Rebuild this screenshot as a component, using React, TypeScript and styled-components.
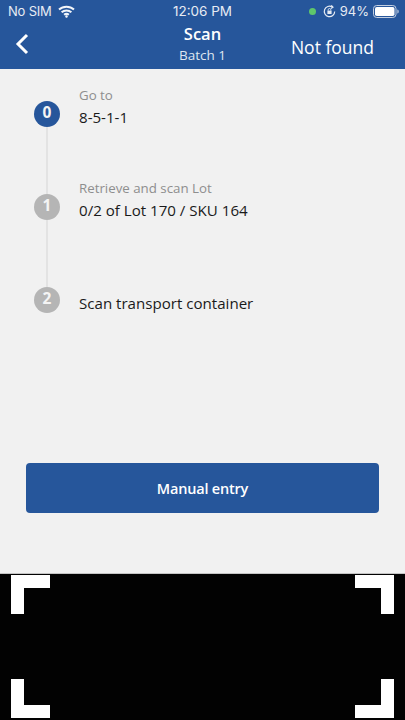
import React from "react";
import styled, { createGlobalStyle } from "styled-components";

const GlobalStyle = createGlobalStyle`
	html, body {
		margin: 0;
		padding: 0;
		background: #f1f1f1;
	}
`;

const Page = styled.div`
	width: 405px;
	height: 720px;
	display: flex;
	flex-direction: column;
	overflow: hidden;
	font-family: "Open Sans", "Liberation Sans", sans-serif;
	background: #f1f1f1;
`;

const Header = styled.header`
	height: 69px;
	flex-shrink: 0;
	background: #26569b;
	color: #fff;
`;

const StatusBar = styled.div`
	height: 22px;
	display: grid;
	grid-template-columns: 1fr auto 1fr;
	align-items: center;
	padding: 0 6px;
	font-family: Inter, "Liberation Sans", sans-serif;
	font-size: 13px;
	color: #e6ebf3;
`;

const StatusLeft = styled.div`
	display: flex;
	align-items: center;
	gap: 6px;
	padding-left: 2px;
	letter-spacing: -0.2px;
`;

const StatusTime = styled.div`
	font-size: 13.5px;
`;

const StatusRight = styled.div`
	display: flex;
	align-items: center;
	justify-content: flex-end;
	gap: 4px;
`;

const GreenDot = styled.span`
	width: 7px;
	height: 7px;
	border-radius: 50%;
	background: #5fc66b;
	margin-right: 3px;
`;

const NavBar = styled.div`
	height: 47px;
	display: grid;
	grid-template-columns: 1fr auto 1fr;
	align-items: center;
	padding: 0 15px;
`;

const BackButton = styled.button`
	width: 14px;
	height: 22px;
	padding: 0;
	border: none;
	background: none;
	display: flex;
	margin-top: -4px;
`;

const TitleBlock = styled.div`
	display: flex;
	flex-direction: column;
	align-items: center;
	margin-top: -3px;
`;

const Title = styled.div`
	font-size: 16.5px;
	font-weight: 600;
	line-height: 22px;
`;

const Subtitle = styled.div`
	font-size: 13.5px;
	line-height: 20px;
	color: #dfe6f0;
`;

const NotFound = styled.div`
	justify-self: end;
	margin: 2px 16px 0 0;
	font-size: 17.5px;
	line-height: 24px;
`;

const Content = styled.main`
	flex: 1;
	padding: 18px 26px 0;
`;

const Steps = styled.div`
	padding-left: 8px;
`;

const Step = styled.div`
	height: 93px;
	display: flex;
	gap: 19px;
`;

const Rail = styled.div<{ $first?: boolean }>`
	width: 26px;
	display: flex;
	flex-direction: column;
	align-items: center;
	&::before {
		content: "";
		width: 2px;
		height: 14px;
		background: ${(props) => (props.$first ? "transparent" : "#e3e3e3")};
	}
`;

const Line = styled.div`
	flex: 1;
	width: 2px;
	background: #e3e3e3;
`;

const Circle = styled.div<{ $active?: boolean }>`
	width: 26px;
	height: 26px;
	flex-shrink: 0;
	border-radius: 50%;
	display: flex;
	align-items: center;
	justify-content: center;
	background: ${(props) => (props.$active ? "#26569b" : "#b5b5b5")};
	color: #f4f4f4;
	font-size: 15.5px;
	font-weight: 700;
	line-height: 1;
	padding-bottom: 3px;
	box-sizing: border-box;
`;

const Label = styled.div`
	height: 16px;
	font-size: 13.3px;
	line-height: 16px;
	color: #8e8e8e;
`;

const Value = styled.div`
	margin-top: 3px;
	font-size: 15.1px;
	font-weight: 500;
	line-height: 22px;
	color: #1a1a1a;
`;

const ManualButton = styled.button`
	display: block;
	width: 353px;
	height: 50px;
	margin-top: 97px;
	border: none;
	border-radius: 4px;
	background: #26569b;
	color: #fff;
	font-family: inherit;
	font-size: 14.5px;
	font-weight: 600;
	letter-spacing: -0.2px;
`;

const Scanner = styled.section`
	position: relative;
	height: 147px;
	flex-shrink: 0;
	box-sizing: border-box;
	border-top: 1px solid #c4c4c4;
	background: #020202;
`;

// 스캔 영역 모서리 표시
const Corner = styled.div<{ $v: "top" | "bottom"; $h: "left" | "right" }>`
	position: absolute;
	${(props) => props.$v}: ${(props) => (props.$v === "top" ? "1px" : "2px")};
	${(props) => props.$h}: 11px;
	width: 39px;
	height: 39px;
	box-sizing: border-box;
	border-${(props) => props.$v}: 13px solid #fff;
	border-${(props) => props.$h}: 13px solid #fff;
`;

const WifiIcon = () => (
	<svg width="17" height="13" viewBox="0 0 17 13" fill="none" stroke="#f2f5f9" strokeWidth="2">
		<path d="M1 4.6C5.2 .8 11.8 .8 16 4.6" />
		<path d="M3.6 7.3C6.4 4.9 10.6 4.9 13.4 7.3" />
		<path d="M6.1 9.8C7.5 8.7 9.5 8.7 10.9 9.8" />
		<circle cx="8.5" cy="11.5" r="1" fill="#f2f5f9" strokeWidth="0.6" />
	</svg>
);

const RotationLockIcon = () => (
	<svg width="13" height="13" viewBox="0 0 13 13" fill="none" stroke="#e6ebf3" strokeWidth="1.2">
		<path d="M11.7 6.5A5.2 5.2 0 1 1 9.2 2" />
		<path d="M8.3 .4 10 2.2 8 3.6" />
		<rect x="4.4" y="5.6" width="4.2" height="3.4" fill="#e6ebf3" stroke="none" />
		<path d="M5.2 5.6V4.8a1.3 1.3 0 0 1 2.6 0v.8" strokeWidth="0.9" />
	</svg>
);

const BatteryIcon = () => (
	<svg width="26" height="13" viewBox="0 0 26 13" fill="none">
		<rect x="0.5" y="0.5" width="22.5" height="12" rx="3.2" stroke="#c3cfe1" />
		<rect x="2" y="2" width="19.5" height="9" rx="1.8" fill="#fff" />
		<path d="M24.4 4.5c.9.3 1.3 1.1 1.3 2s-.4 1.7-1.3 2z" fill="#c3cfe1" />
	</svg>
);

const BackIcon = () => (
	<svg width="14" height="22" viewBox="0 0 14 22" fill="none" stroke="#fff" strokeWidth="3">
		<path d="M12 2 3 11l9 9" />
	</svg>
);

const App = () => {
	return (
		<Page>
			<GlobalStyle />
			<Header>
				<StatusBar>
					<StatusLeft>
						No SIM
						<WifiIcon />
					</StatusLeft>
					<StatusTime>12:06 PM</StatusTime>
					<StatusRight>
						<GreenDot />
						<RotationLockIcon />
						94%
						<BatteryIcon />
					</StatusRight>
				</StatusBar>
				<NavBar>
					<BackButton aria-label="Back">
						<BackIcon />
					</BackButton>
					<TitleBlock>
						<Title>Scan</Title>
						<Subtitle>Batch 1</Subtitle>
					</TitleBlock>
					<NotFound>Not found</NotFound>
				</NavBar>
			</Header>
			<Content>
				<Steps>
					<Step>
						<Rail $first>
							<Circle $active>0</Circle>
							<Line />
						</Rail>
						<div>
							<Label>Go to</Label>
							<Value>8-5-1-1</Value>
						</div>
					</Step>
					<Step>
						<Rail>
							<Circle>1</Circle>
							<Line />
						</Rail>
						<div>
							<Label>Retrieve and scan Lot</Label>
							<Value>0/2 of Lot 170 / SKU 164</Value>
						</div>
					</Step>
					<Step>
						<Rail>
							<Circle>2</Circle>
						</Rail>
						<div>
							<Label />
							<Value>Scan transport container</Value>
						</div>
					</Step>
				</Steps>
				<ManualButton>Manual entry</ManualButton>
			</Content>
			<Scanner>
				<Corner $v="top" $h="left" />
				<Corner $v="top" $h="right" />
				<Corner $v="bottom" $h="left" />
				<Corner $v="bottom" $h="right" />
			</Scanner>
		</Page>
	);
};

export default App;
